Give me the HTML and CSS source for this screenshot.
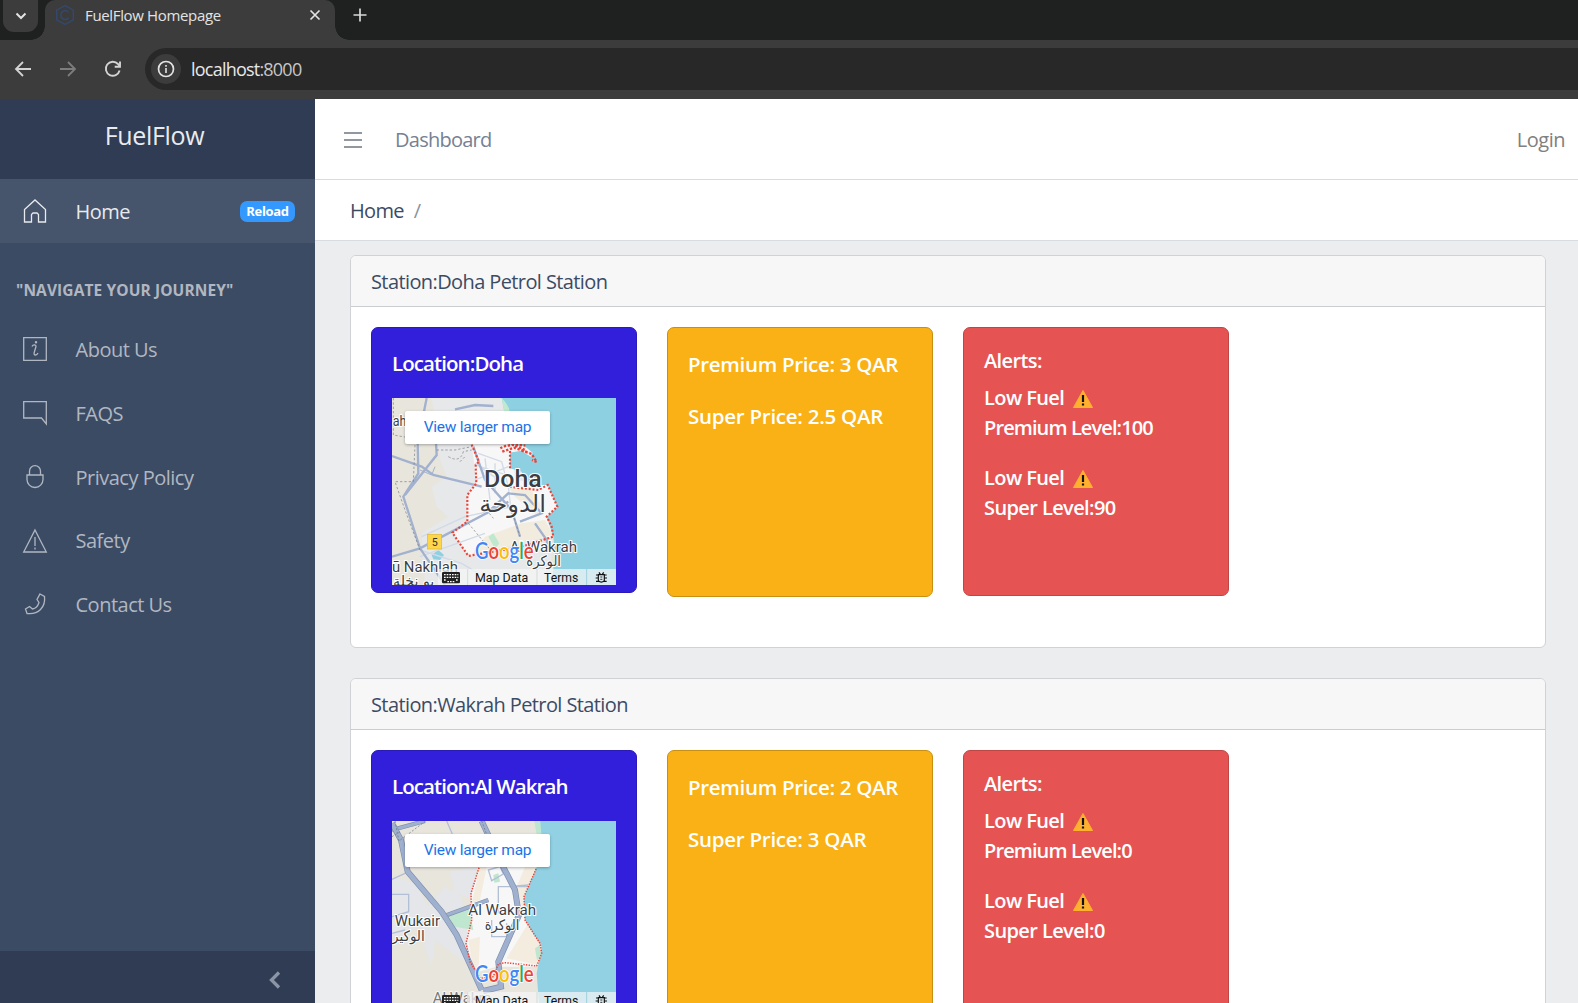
FILE: index.html
```html
<!DOCTYPE html>
<html lang="en">
<head>
<meta charset="utf-8">
<title>FuelFlow Homepage</title>
<link rel="stylesheet" href="styles.css">
</head>
<body>
<div class="browser">
  <div class="tabstrip">
    <span class="tab-search"><svg width="14" height="10" viewBox="0 0 14 10"><path d="M2.500 2.500 7 7l4.500-4.500" fill="none" stroke="#e3e3e3" stroke-width="2"/></svg></span>
    <div class="tab">
      <svg class="favicon" width="20" height="22" viewBox="0 0 20 22" fill="none" stroke="#33486b" stroke-width="1.500"><path d="M10 1.500 18.300 6.200v9.600L10 20.500 1.700 15.800V6.200z"/><path d="M13.500 8.300A4.200 4.200 0 0 0 6 10v2a4.200 4.200 0 0 0 7.500 1.700"/></svg>
      <span class="tab-title">FuelFlow Homepage</span>
      <svg class="tab-close" width="12" height="12" viewBox="0 0 12 12"><path d="M1.500 1.500 10.500 10.500M10.500 1.500 1.500 10.500" stroke="#e3e3e3" stroke-width="1.700"/></svg>
    </div>
    <svg class="tab-new" width="14" height="14" viewBox="0 0 14 14"><path d="M7 .5v13M.5 7h13" stroke="#d8d8d8" stroke-width="1.700"/></svg>
  </div>
  <div class="toolbar">
    <svg class="tool" width="18" height="18" viewBox="0 0 18 18" fill="none" stroke="#d4d4d4" stroke-width="1.800"><path d="M17 9H2M9 2 2 9l7 7"/></svg>
    <svg class="tool" width="18" height="18" viewBox="0 0 18 18" fill="none" stroke="#7c7c7c" stroke-width="1.800"><path d="M1 9h15M9 2l7 7-7 7"/></svg>
    <svg class="tool" width="18" height="18" viewBox="0 0 18 18" fill="none" stroke="#d4d4d4" stroke-width="1.900"><path d="M15.600 10.500A7 7 0 1 1 14 4l1.500 2"/><path d="M16 1.500v5.300h-5.300"/></svg>
    <div class="omnibox">
      <span class="site-info"><svg width="18" height="18" viewBox="0 0 18 18"><circle cx="9" cy="9" r="7.500" fill="none" stroke="#e3e3e3" stroke-width="1.700"/><path d="M9 8v5M9 5v1.800" stroke="#e3e3e3" stroke-width="1.600"/></svg></span>
      <span class="url">localhost<span class="port">:8000</span></span>
    </div>
  </div>
</div>

<div class="app">
  <aside class="sidebar">
    <div class="brand">FuelFlow</div>
    <a class="nav-link active">
      <svg class="nav-icon" viewBox="0 0 24 24"><path d="M1.500 23V10.500L12 1l10.500 9.500V23H15.500v-7.500L14 14h-4l-1.500 1.500V23z"/></svg>
      <span class="nav-text">Home</span><span class="badge">Reload</span>
    </a>
    <div class="nav-title">"Navigate your journey"</div>
    <a class="nav-link">
      <svg class="nav-icon" viewBox="0 0 24 24"><path d="M.7.700h22.600v22.600H.7zM9 9.500Q10 7.500 12 8q1.500.5.700 2.500l-1.500 5q-.5 2.500 1.300 2.500 1.500 0 2.500-2"/><circle cx="13" cy="5.200" r=".6"/></svg>
      <span class="nav-text">About Us</span>
    </a>
    <a class="nav-link">
      <svg class="nav-icon" viewBox="0 0 24 24"><path d="M.7.700h22.600V23L18.500 17H.7z"/></svg>
      <span class="nav-text">FAQS</span>
    </a>
    <a class="nav-link">
      <svg class="nav-icon" viewBox="0 0 24 24"><path d="M4 10h16v4.500a8 8 0 0 1-16 0zM6.500 10V6.200a5.500 5.500 0 0 1 11 0V10"/></svg>
      <span class="nav-text">Privacy Policy</span>
    </a>
    <a class="nav-link">
      <svg class="nav-icon" viewBox="0 0 24 24"><path d="M12 1 23.300 23H.7zM12 8v9M12 18.500v2"/></svg>
      <span class="nav-text">Safety</span>
    </a>
    <a class="nav-link">
      <svg class="nav-icon" viewBox="0 0 24 24"><path d="m17 2 4.500 2.500q1 8-4 13T4 21.500L2.500 17l4-2.500 3 2.500q2.500-.5 4-2t2.500-4.500l-2-3z"/></svg>
      <span class="nav-text">Contact Us</span>
    </a>
    <div class="sidebar-footer"><svg width="12" height="18" viewBox="0 0 12 18"><path d="M10 1.500 2.500 9l7.500 7.500" fill="none" stroke="#8b95a5" stroke-width="3.300"/></svg></div>
  </aside>

  <main class="main">
    <header class="header">
      <svg class="menu" width="18" height="18" viewBox="0 0 18 18"><path d="M0 2h18M0 9h18M0 16h18" stroke="#6f7780" stroke-width="1.500"/></svg>
      <span class="dash">Dashboard</span><span class="login">Login</span>
    </header>
    <div class="breadcrumb"><span class="crumb">Home</span><span class="slash">/</span></div>

    <section class="station">
      <h2 class="station-head">Station:Doha Petrol Station</h2>
      <div class="station-body">
        <div class="tile location">
          <h4>Location:Doha</h4>
          <svg class="map" viewBox="81 234 672 561">
            <rect x="81" y="234" width="672" height="561" fill="#e8e5dd"/>
            <path d="M200 234H410L440 330 480 450 560 600V795H180L170 640 250 590 215 560 200 500 245 470 225 420z" fill="#e6e8ea"/>
            <path d="M320 372H440L450 480 555 495 580 560 545 590 565 650 470 660 310 708 262 638 307 605V525L335 490z" fill="#f7f7f7"/>
            <path d="M430 500l60-5 50 80-20 15-70-60zM360 650l110-40 70-10 25 45-90 20-160 45z" fill="#f2ecdf"/>
            <path d="M410 234 420 285 440 372 415 380 410 395 435 390 435 445 470 455 480 495 548 495 577 562 545 590 565 650 570 700 560 795H753V234z" fill="#8dd0e1"/>
            <path d="M408 388l15-14 55 4 25 20-5 12-30-18-45 8z" fill="#f7f7f7"/>
            <path d="M410 234q30 30 25 60l-15-5zM370 650l15-10 18 30-12 18z" fill="#bfe8cf"/>
            <path d="M200 705l20-15 17 15-12 15-20-2z" fill="#8dd0e1"/>
            <g fill="none" stroke="#d1dae6" stroke-width="4">
              <path d="M170 650 300 590 440 560M165 710 360 640M330 430 430 500 440 590M340 400 410 425 430 500M345 440 440 470M360 415 375 540M165 690 290 730 340 760M390 430V520M330 480 430 440"/>
            </g>
            <g fill="none" stroke="#a1b1ce" stroke-width="7">
              <path d="M185 234 158 370 160 460 115 530 165 685 240 795M81 408 170 440 205 465 350 500M120 525 215 405 213 370M81 710 165 685 430 545M270 268 330 255 385 258M325 380 360 480 440 570 465 650M365 580 430 520 480 525 530 580 465 605M510 610 545 660 550 690" />
              <path d="M210 440 200 465 165 450" stroke-width="3"/>
            </g>
            <g fill="none" stroke="#777c83" stroke-width="2" stroke-dasharray="7 6">
              <path d="M85 234V345L125 352M150 375 145 485H90L120 570 165 690M215 390H270L320 380M250 410q35 20 45-15l25-5M285 425l15-15M310 610 385 700M365 570l20 25M440 570 465 650"/>
            </g>
            <path d="M320 374 342 425 332 435 334 490 307 525V605L262 638 310 708 470 680 565 650 560 620 545 590 577 560 548 495 520 510 430 500M435 445 435 390" fill="none" stroke="#ed4337" stroke-width="6.500" stroke-dasharray="6 5.500"/>
            <path d="M406 385q25-15 75-8M412 395l35-12 45 15M440 372l40 18M470 392l30 10 15 24-14-6" fill="none" stroke="#ed4337" stroke-width="7" stroke-dasharray="7 5"/>
            <g class="map-label">
              <text x="83" y="319" font-size="44" textLength="41" lengthAdjust="spacingAndGlyphs">ah</text>
              <text x="357" y="502" font-size="72" font-weight="500" textLength="173" lengthAdjust="spacingAndGlyphs">Doha</text>
              <text x="343" y="576" font-size="72" class="arabic" textLength="200" lengthAdjust="spacingAndGlyphs">الدوحة</text>
              <text x="434" y="696" font-size="44" textLength="202" lengthAdjust="spacingAndGlyphs">Al Wakrah</text>
              <text x="484" y="739" font-size="43" class="arabic" textLength="104" lengthAdjust="spacingAndGlyphs">الوكرة</text>
              <text x="81" y="757" font-size="44" textLength="198" lengthAdjust="spacingAndGlyphs">ū Nakhlah</text>
              <text x="84" y="797" font-size="43" class="arabic" textLength="124" lengthAdjust="spacingAndGlyphs">بو نخلة</text>
            </g>
            <rect x="187" y="643" width="43" height="44" fill="#fdd649" stroke="#e2b82f" stroke-width="2"/><text x="200" y="678" class="road">5</text>
            <text x="330" y="718" class="google" textLength="176" lengthAdjust="spacingAndGlyphs"><tspan fill="#4285f4">G</tspan><tspan fill="#ea4335">o</tspan><tspan fill="#fbbc04">o</tspan><tspan fill="#4285f4">g</tspan><tspan fill="#34a853">l</tspan><tspan fill="#ea4335">e</tspan></text>
            <g class="map-bar"><rect x="219" y="747" width="534" height="48" fill="#f5f5f5" fill-opacity=".72"/><path d="M308 747v48M516 747v48" stroke="#d9d9d9" stroke-width="3"/><path d="M665 747v48" stroke="#9fd0dd" stroke-width="3"/>
            <rect x="231" y="756" width="54" height="34" rx="4" fill="#222"/><path d="M237 764h43M237 772h43M237 780h7M273 780h7M247 785h22" stroke="#fff" stroke-width="4" stroke-dasharray="5 3"/>
            <text x="330" y="786" textLength="160" lengthAdjust="spacingAndGlyphs">Map Data</text><text x="537" y="786" textLength="103" lengthAdjust="spacingAndGlyphs">Terms</text>
            <path d="M700 764h18v18q-9 9-18 0zM693 765h7M718 765h7M692 774h8M718 774h8M693 784h8M717 784h8M702 757l4 6M716 757l-4 6" fill="none" stroke="#111" stroke-width="3.500"/><path d="M706 771h6M706 778h6" stroke="#111" stroke-width="2.500"/></g>
          </svg>
          <span class="map-button">View larger map</span>
        </div>
        <div class="tile price"><h4>Premium Price: 3 QAR</h4><h4>Super Price: 2.5 QAR</h4></div>
        <div class="tile alerts">
          <h5>Alerts:</h5>
          <p>Low Fuel <svg class="warn" viewBox="0 0 20 18"><path d="M10 .5 19.500 17.500H.5z" fill="#ffb02e" stroke="#ffb02e" stroke-linejoin="round"/><path d="M10 5v7M10 13.500v2" stroke="#111" stroke-width="2.200"/></svg><br><span class="premium">Premium Level:100</span></p>
          <p>Low Fuel <svg class="warn" viewBox="0 0 20 18"><path d="M10 .5 19.500 17.500H.5z" fill="#ffb02e" stroke="#ffb02e" stroke-linejoin="round"/><path d="M10 5v7M10 13.500v2" stroke="#111" stroke-width="2.200"/></svg><br>Super Level:90</p>
        </div>
      </div>
    </section>

    <section class="station">
      <h2 class="station-head">Station:Wakrah Petrol Station</h2>
      <div class="station-body">
        <div class="tile location">
          <h4>Location:Al Wakrah</h4>
          <svg class="map" viewBox="81 243 672 561">
            <rect x="81" y="243" width="672" height="561" fill="#e8e5dd"/>
            <path d="M81 410 150 430 190 500 240 440 290 470 310 600 330 690 210 600 200 680 160 560 81 600zM255 395 330 381V480L270 460z" fill="#e4e6e9"/>
            <path d="M345 381H515L477 470 480 540 530 620 520 680H395L325 700 305 600 320 460z" fill="#f7f7f7"/>
            <path d="M345 381 365 381 345 480 320 490zM480 381 515 381 477 470 480 540 455 440zM490 550 530 620 520 675 425 655zM310 600 345 590 340 690 325 690z" fill="#f3ecdf"/>
            <path d="M510 243 522 300 515 381 477 470 480 540 530 620 515 700 523 804H753V243z" fill="#91d1e3"/>
            <path d="M508 243h18l3 40-12 15zM385 405l15-5 5 25-17 3zM242 525 310 498 325 570 270 560zM510 625l15-10 3 35-12 10z" fill="#bfe6cf"/>
            <g fill="none" stroke="#b3bfd5" stroke-width="4"><path d="M81 463H131V515L81 530M245 243 262 282M81 418 120 400M400 520V440H490M370 390l35-10 10 22-35 20zM380 540v50h45v-40M430 440l60-5M81 580 120 570"/></g>
            <g fill="none">
              <path class="road-edge" d="M240 527 370 480M81 270 180 243"/><path class="road-core thin" d="M240 527 370 480M81 270 180 243"/>
              <path class="road-edge main-road" d="M81 250 108 300 128 395 230 515 275 585 350 750M350 243 415 381 450 450 462 525 400 665 408 740 355 753"/>
              <path class="road-core" d="M81 250 108 300 128 395 230 515 275 585 350 750M350 243 415 381 450 450 462 525 400 665 408 740 355 753"/>
            </g>
            <path d="M90 243l12 60 80-60M350 243l15 40M81 290l25-15" fill="none" stroke="#68707c" stroke-width="2" stroke-dasharray="6 5"/>
            <path d="M342 383 318 460 320 540 303 610 315 665 345 715 385 710 400 672 420 668 515 678 530 640 525 610 480 540 477 470 515 383" fill="none" stroke="#ed4337" stroke-width="4.500" stroke-dasharray="4 4"/>
            <g class="map-label">
              <text x="310" y="526" font-size="44" textLength="203" lengthAdjust="spacingAndGlyphs">Al Wakrah</text>
              <text x="359" y="571" font-size="43" class="arabic" textLength="104" lengthAdjust="spacingAndGlyphs">الوكرة</text>
              <text x="89" y="558" font-size="44" textLength="136" lengthAdjust="spacingAndGlyphs">Wukair</text>
              <text x="81" y="603" font-size="43" class="arabic" textLength="98" lengthAdjust="spacingAndGlyphs">الوكير</text>
              <text x="203" y="788" font-size="44" textLength="176" lengthAdjust="spacingAndGlyphs" opacity=".65">Al Wakra</text>
            </g>
            <text x="330" y="727" class="google" textLength="176" lengthAdjust="spacingAndGlyphs"><tspan fill="#4285f4">G</tspan><tspan fill="#ea4335">o</tspan><tspan fill="#fbbc04">o</tspan><tspan fill="#4285f4">g</tspan><tspan fill="#34a853">l</tspan><tspan fill="#ea4335">e</tspan></text>
            <g class="map-bar" transform="translate(0 9)"><rect x="308" y="747" width="445" height="48" fill="#f5f5f5" fill-opacity=".72"/><path d="M308 747v48M516 747v48" stroke="#d9d9d9" stroke-width="3"/><path d="M665 747v48" stroke="#9fd0dd" stroke-width="3"/>
            <rect x="231" y="756" width="54" height="34" rx="4" fill="#222"/><path d="M237 764h43M237 772h43M237 780h7M273 780h7M247 785h22" stroke="#fff" stroke-width="4" stroke-dasharray="5 3"/>
            <text x="330" y="786" textLength="160" lengthAdjust="spacingAndGlyphs">Map Data</text><text x="537" y="786" textLength="103" lengthAdjust="spacingAndGlyphs">Terms</text>
            <path d="M700 764h18v18q-9 9-18 0zM693 765h7M718 765h7M692 774h8M718 774h8M693 784h8M717 784h8M702 757l4 6M716 757l-4 6" fill="none" stroke="#111" stroke-width="3.500"/><path d="M706 771h6M706 778h6" stroke="#111" stroke-width="2.500"/></g>
          </svg>
          <span class="map-button">View larger map</span>
        </div>
        <div class="tile price"><h4>Premium Price: 2 QAR</h4><h4>Super Price: 3 QAR</h4></div>
        <div class="tile alerts">
          <h5>Alerts:</h5>
          <p>Low Fuel <svg class="warn" viewBox="0 0 20 18"><path d="M10 .5 19.500 17.500H.5z" fill="#ffb02e" stroke="#ffb02e" stroke-linejoin="round"/><path d="M10 5v7M10 13.500v2" stroke="#111" stroke-width="2.200"/></svg><br><span class="premium">Premium Level:0</span></p>
          <p>Low Fuel <svg class="warn" viewBox="0 0 20 18"><path d="M10 .5 19.500 17.500H.5z" fill="#ffb02e" stroke="#ffb02e" stroke-linejoin="round"/><path d="M10 5v7M10 13.500v2" stroke="#111" stroke-width="2.200"/></svg><br>Super Level:0</p>
        </div>
      </div>
    </section>
  </main>
</div>
</body>
</html>
```
FILE: styles.css
```css
* { box-sizing: border-box; }
body { margin: 0; height: 1003px; overflow: hidden; display: flex; flex-direction: column; font: 20px/30px "Open Sans", "Noto Sans", sans-serif; letter-spacing: -0.45px; color: #3c4b64; }
svg { display: block; flex: none; }
h2, h4, h5, p { margin: 0; }

/* Browser chrome */
.browser { flex: none; height: 99px; background: #3c3c3c; }
.tabstrip { height: 40px; display: flex; background: #1f2121; }
.tab-search { width: 35px; height: 32px; margin: 0 7px 0 3px; border-radius: 0 0 11px 11px; background: #3c3c3c; display: flex; align-items: center; justify-content: center; }
.tab { position: relative; width: 290px; height: 40px; background: #3c3c3c; border-radius: 10px 10px 0 0; display: flex; align-items: center; padding: 0 14px 10px 10px; }
.tab::before, .tab::after { content: ""; position: absolute; bottom: 0; width: 14px; height: 14px; }
.tab::before { left: -14px; background: radial-gradient(circle at 0 0, transparent 13.5px, #3c3c3c 14px); }
.tab::after { right: -14px; background: radial-gradient(circle at 100% 0, transparent 13.5px, #3c3c3c 14px); }
.tab-title { margin-left: 10px; font-size: 15px; color: #e3e3e3; letter-spacing: -0.35px; flex: 1; white-space: nowrap; }
.tab-new { margin: 8px 0 0 18px; }
.toolbar { height: 59px; display: flex; align-items: center; padding: 0 0 2px 14px; gap: 27px; }
.omnibox { flex: 1; height: 42px; margin-left: -4px; border-radius: 21px 0 0 21px; background: #282828; display: flex; align-items: center; padding-left: 6px; }
.site-info { width: 30px; height: 30px; border-radius: 50%; background: #3c3c3c; display: flex; align-items: center; justify-content: center; }
.url { margin-left: 10px; font-size: 18px; letter-spacing: -0.78px; color: #e8e8e8; }
.port { color: #c7c7c7; }

/* Sidebar */
.app { flex: 1; min-height: 0; display: flex; }
.sidebar { width: 315px; background: #3c4b64; display: flex; flex-direction: column; color: #b1b7c1; }
.brand { height: 80px; padding: 0 6px 8px 0; display: flex; align-items: center; justify-content: center; background: #303c54; color: #e9ebee; font-size: 25px; letter-spacing: -0.35px; }
.nav-link { height: 63.75px; display: flex; align-items: center; padding: 0 20px 0 23px; flex: none; }
.nav-icon { width: 24px; height: 24px; margin-right: 28.5px; fill: none; stroke: currentColor; stroke-width: 1.3; overflow: visible; }
.nav-text { padding-top: 1.5px; letter-spacing: -0.5px; }
.active { background: #46546c; color: #e8eaed; height: 64px; }
.badge { margin-left: auto; width: 55px; height: 21px; border-radius: 7px; background: #39f; color: #fff; font-size: 13px; font-weight: 700; line-height: 21px; text-align: center; letter-spacing: -0.3px; }
.nav-title { padding: 35px 16px 15.5px; font-size: 15.5px; line-height: 24px; font-weight: 700; text-transform: uppercase; letter-spacing: 0.1px; white-space: nowrap; }
.sidebar-footer { margin-top: auto; height: 52px; background: #303c54; display: flex; align-items: center; justify-content: flex-end; padding: 6px 34px 0 0; }

/* Content */
.main { flex: 1; min-width: 0; overflow: hidden; background: #ebedef; display: flex; flex-direction: column; }
.header { flex: none; height: 81px; background: #fff; border-bottom: 1px solid #d8dbe0; display: flex; align-items: center; padding: 2px 13px 0 29px; color: #768192; letter-spacing: -0.75px; }
.dash { margin-left: 33px; }
.login { margin-left: auto; color: #808080; letter-spacing: -0.5px; }
.breadcrumb { flex: none; height: 61px; background: #fff; border-bottom: 1px solid #d8dbe0; padding: 2px 0 0 35px; display: flex; align-items: center; gap: 10px; letter-spacing: -0.7px; }
.slash { color: #8a93a2; }
.station { flex: none; height: 393px; margin: 14px 32px 16px 35px; border: 1px solid #d0d2d5; border-radius: 6px; background: #fff; overflow: hidden; }
.station-head { height: 51px; padding-left: 20px; border-bottom: 1px solid #cbcdd0; background: #f7f7f7; font-size: 20px; line-height: 51px; font-weight: 400; letter-spacing: -0.6px; }
.station-body { display: flex; align-items: flex-start; gap: 30px; padding: 20px; }
.tile { width: 266px; border: 1px solid; border-radius: 7px; padding: 20px; color: #fff; font-weight: 600; }
.tile h4 { font-size: 20.5px; font-weight: 600; line-height: 26px; margin-top: 3px; white-space: nowrap; letter-spacing: -0.32px; }
.location { position: relative; height: 266px; background: #321fdb; border-color: #2a1ab9; }
.location h4 { margin-top: 2px; letter-spacing: -0.92px; }
.price { height: 270px; background: #f9b115; border-color: #c98f11; }
.price h4 + h4 { margin-top: 26px; letter-spacing: -0.26px; }
.alerts { height: 269px; background: #e55353; border-color: #c04646; letter-spacing: -0.6px; }
.alerts h5 { font-size: 20px; line-height: 24px; font-weight: 600; padding-top: 1px; margin-bottom: 10px; }
.alerts p { margin-bottom: 20px; }
.premium { letter-spacing: -0.9px; }
.warn { display: inline-block; width: 20px; height: 18px; vertical-align: -3px; margin-left: 4px; }

/* Embedded maps */
.map { width: 224px; height: 187px; margin-top: 22px; font-family: Roboto, sans-serif; letter-spacing: 0; font-weight: 400; }
.map-label text { fill: #3b3f45; stroke: #fff; stroke-width: 6px; paint-order: stroke; stroke-linejoin: round; }
.map-label .arabic { font-family: "DejaVu Sans", sans-serif; }
.road { font-size: 32px; fill: #333; }
.google { font: 600 67px Lato, sans-serif; stroke: #fff; stroke-width: 5px; paint-order: stroke; }
.map-bar text { font-size: 37px; fill: #111; }
.road-edge { stroke: #7e8fae; stroke-width: 13px; }
.road-core { stroke: #9fb1cf; stroke-width: 14px; }
.road-core.thin { stroke-width: 9px; }
.main-road { stroke-width: 18px; }
.map-button { position: absolute; left: 33px; top: 83px; width: 145px; height: 33px; border-radius: 2px; background: #fff; box-shadow: 0 1px 3px rgba(0,0,0,.3); color: #1a73e8; font: 400 15.5px/33px Roboto, sans-serif; letter-spacing: -0.25px; text-align: center; }
```
